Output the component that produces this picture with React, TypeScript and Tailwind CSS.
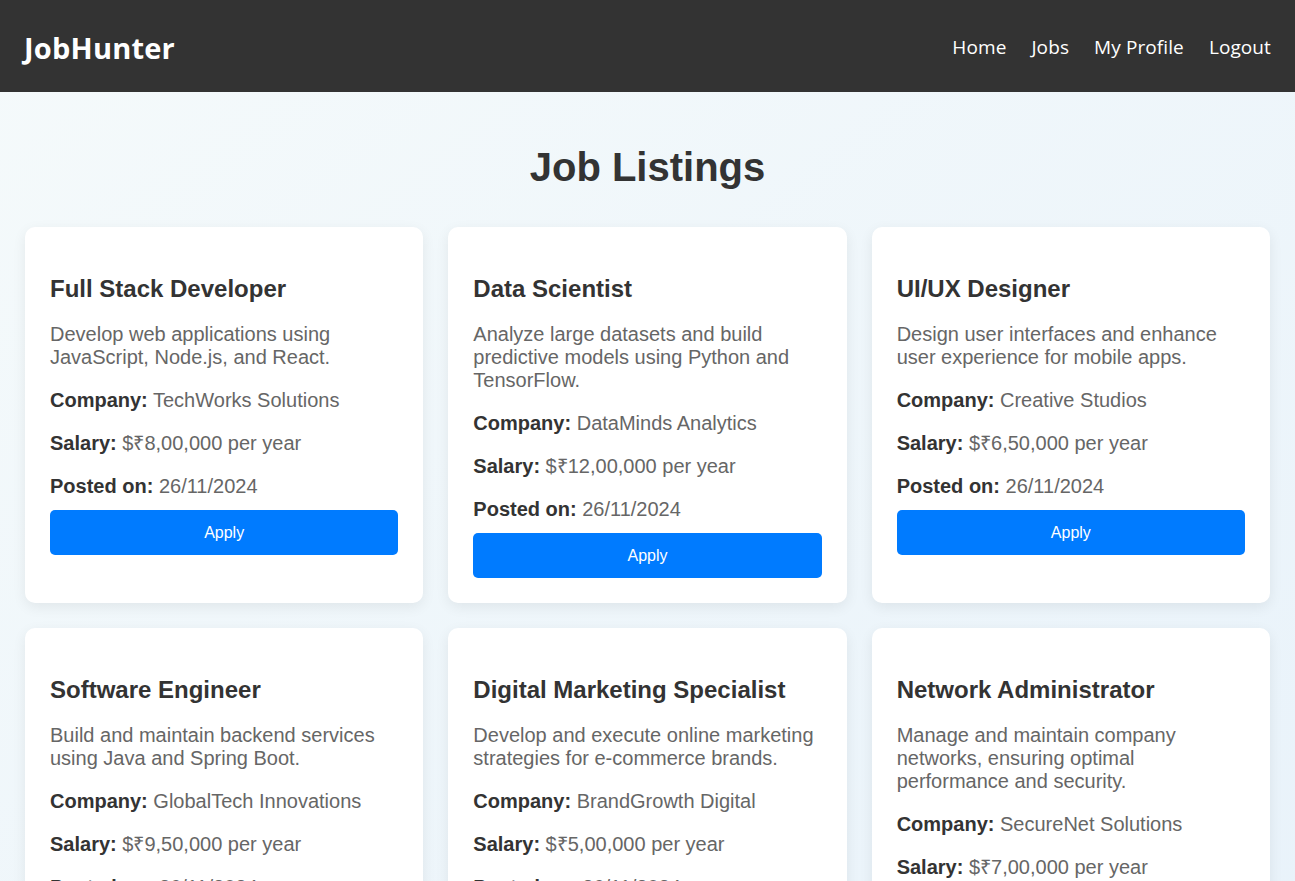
import React from "react";

type Job = {
  title: string;
  desc: string;
  company: string;
  salary: string;
  date: string;
};

const jobs: Job[] = [
  {
    title: "Full Stack Developer",
    desc: "Develop web applications using JavaScript, Node.js, and React.",
    company: "TechWorks Solutions",
    salary: "$₹8,00,000 per year",
    date: "26/11/2024",
  },
  {
    title: "Data Scientist",
    desc: "Analyze large datasets and build predictive models using Python and TensorFlow.",
    company: "DataMinds Analytics",
    salary: "$₹12,00,000 per year",
    date: "26/11/2024",
  },
  {
    title: "UI/UX Designer",
    desc: "Design user interfaces and enhance user experience for mobile apps.",
    company: "Creative Studios",
    salary: "$₹6,50,000 per year",
    date: "26/11/2024",
  },
  {
    title: "Software Engineer",
    desc: "Build and maintain backend services using Java and Spring Boot.",
    company: "GlobalTech Innovations",
    salary: "$₹9,50,000 per year",
    date: "26/11/2024",
  },
  {
    title: "Digital Marketing Specialist",
    desc: "Develop and execute online marketing strategies for e-commerce brands.",
    company: "BrandGrowth Digital",
    salary: "$₹5,00,000 per year",
    date: "26/11/2024",
  },
  {
    title: "Network Administrator",
    desc: "Manage and maintain company networks, ensuring optimal performance and security.",
    company: "SecureNet Solutions",
    salary: "$₹7,00,000 per year",
    date: "26/11/2024",
  },
];

function Card({ job }: { job: Job }) {
  return (
    <div className="flex flex-col rounded-[10px] bg-white px-[25px] pt-[48px] pb-[25px] shadow-[0_4px_14px_rgba(0,0,0,0.07)]">
      <h3 className="text-[24px] leading-[28px] font-bold text-[#333]">{job.title}</h3>
      <p className="mt-[19.5px] text-[20px] leading-[23px] text-[#666]">{job.desc}</p>
      <p className="mt-[20px] text-[20px] leading-[23px] text-[#666]">
        <strong className="font-bold text-[#333]">Company:</strong> {job.company}
      </p>
      <p className="mt-[20px] text-[20px] leading-[23px] text-[#666]">
        <strong className="font-bold text-[#333]">Salary:</strong> {job.salary}
      </p>
      <p className="mt-[20px] text-[20px] leading-[23px] text-[#666]">
        <strong className="font-bold text-[#333]">Posted on:</strong> {job.date}
      </p>
      <button className="mt-[12.5px] h-[45px] w-full rounded-[5px] bg-[#007bff] pt-[1px] text-[16px] text-white">
        Apply
      </button>
    </div>
  );
}

export default function App() {
  return (
    <div
      className="min-h-screen bg-gradient-to-br from-[#f5fafb] to-[#e8f2fa]"
      style={{ fontFamily: '"Liberation Sans", Arial, sans-serif' }}
    >
      <nav
        className="flex h-[92px] items-center justify-between bg-[#333] px-[24px] pt-[3px] text-white"
        style={{ fontFamily: '"Open Sans", "Noto Sans", sans-serif' }}
      >
        <div className="text-[29px] font-bold tracking-[0.2px]">JobHunter</div>
        <div className="flex items-center gap-[25px] text-[19px] tracking-[0.1px]">
          <a>Home</a>
          <a>Jobs</a>
          <a>My Profile</a>
          <a>Logout</a>
        </div>
      </nav>
      <main className="px-[25px] pb-[40px]">
        <h1 className="pt-[52px] text-center text-[40px] leading-[46px] font-bold text-[#333]">
          Job Listings
        </h1>
        <div className="mt-[37px] grid grid-cols-3 gap-[25px]">
          {jobs.map((j) => (
            <Card key={j.title} job={j} />
          ))}
        </div>
      </main>
    </div>
  );
}
